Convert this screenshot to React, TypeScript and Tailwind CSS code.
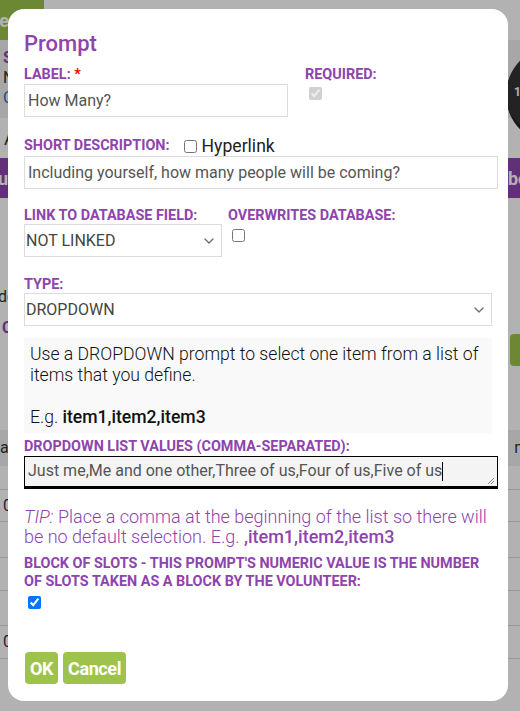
import React from "react";

const Chevron = () => (
  <svg width="10" height="6" viewBox="0 0 10 6" className="pointer-events-none absolute top-1/2 -translate-y-1/2 right-[8px]">
    <path d="M1 1 L5 5 L9 1" fill="none" stroke="#6b6b6b" strokeWidth="1.3" strokeLinecap="round" strokeLinejoin="round" />
  </svg>
);

const Label = ({ children }: { children: React.ReactNode }) => (
  <div className="text-[14.4px] leading-[16px] font-bold text-[#8e44ad] whitespace-nowrap">{children}</div>
);

export default function App() {
  return (
    <div className="relative w-[520px] h-[711px] overflow-hidden bg-white" style={{ fontFamily: "Roboto, 'Noto Sans', sans-serif" }}>
      {/* background page */}
      <div className="flex flex-col w-[520px]">
        <div className="h-[40px] flex">
          <div className="w-[44px] bg-[#9dc34c] text-white font-bold text-[18px] flex items-center justify-end pr-[35px]">Home</div>
        </div>
        <div className="h-[78px] bg-[#f0f0f0] pl-[3px] pt-[8px] flex flex-col text-[16px] leading-[20px]">
          <span className="text-[#8e44ad] font-bold">Sign Up</span>
          <span className="text-[#333]">Name</span>
          <span className="text-[#2a6fb0]">Contact</span>
        </div>
        <div className="h-[40px] flex items-center pl-[4px] text-[18px] text-[#333]">All</div>
        <div className="h-[40px] bg-[#8e44ad] flex items-center justify-between text-white font-bold text-[18px]">
          <span className="-ml-[2px]">up</span>
          <span className="-mr-[28px]">book</span>
        </div>
        <div className="h-[108px] flex items-end text-[16px] leading-[18px] text-[#333]">
          <span className="-ml-[2px]">do</span>
        </div>
        <div className="pt-[14px] pl-[2px] text-[16px] font-bold text-[#8e44ad] leading-[16px]">C</div>
        <div className="flex items-start justify-between pl-[10px] mt-[1px]">
          <div className="h-[36px] w-[200px] border border-[#ccc] flex items-center pl-[2px] text-[16px] text-[#333]">A</div>
          <div className="h-[32px] w-[30px] bg-[#9dc34c] rounded-[4px] -mr-[20px] -mt-[3px]" />
        </div>
        <div className="h-[57px]" />
        <div className="h-[36px] bg-[#f0f0f0] flex items-center justify-between text-[16px] text-[#333]">
          <span>a</span>
          <span className="-mr-[12px]">nd</span>
        </div>
        {[
          { h: "h-[24px]", t: "" },
          { h: "h-[32px]", t: "0" },
          { h: "h-[36px]", t: "" },
          { h: "h-[33px]", t: "" },
          { h: "h-[35px]", t: "" },
          { h: "h-[33px]", t: "0" },
        ].map((r, i) => (
          <div key={i} className={`${r.h} border-b border-[#ddd] flex items-center pl-[3px] text-[16px] text-[#333]`}>{r.t}</div>
        ))}
      </div>
      <div className="absolute left-[506px] top-[46px] w-[100px] h-[98px] rounded-full bg-[#333] border-b-[6px] border-[#222] flex items-center pl-[8px] text-white text-[12px] font-bold">10</div>

      {/* dim overlay */}
      <div className="absolute inset-0 bg-black/30" />

      {/* modal */}
      <div className="absolute left-[8px] top-[9px] w-[500px] h-[692px] bg-white rounded-[16px] pl-[16px] pr-[10px] pt-[22px] flex flex-col">
        <h1 className="text-[22px] leading-[26px] font-medium text-[#8e44ad]">Prompt</h1>

        <div className="flex gap-[17px] mt-[10px]">
          <div className="w-[264px] flex flex-col">
            <Label>
              LABEL: <span className="text-[#ff0000]">*</span>
            </Label>
            <input
              className="mt-[1px] h-[33px] border border-[#dcdcdc] px-[3px] text-[16px] text-[#555] outline-none"
              defaultValue="How Many?"
            />
          </div>
          <div className="flex flex-col">
            <Label>REQUIRED:</Label>
            <input type="checkbox" defaultChecked disabled className="m-0 mt-[4px] ml-[4px] w-[13px] h-[13px]" />
          </div>
        </div>

        <div className="flex items-center h-[16px] mt-[21px]">
          <Label>SHORT DESCRIPTION:</Label>
          <input type="checkbox" className="m-0 ml-[14px] w-[13px] h-[13px]" />
          <span className="ml-[5px] text-[17.6px] leading-[16px] text-[#222]">Hyperlink</span>
        </div>
        <input
          className="mt-[2px] h-[33px] w-[474px] border border-[#dcdcdc] px-[3px] text-[16px] text-[#555] outline-none"
          defaultValue="Including yourself, how many people will be coming?"
        />

        <div className="flex gap-[6px] mt-[19px]">
          <div className="w-[198px] flex flex-col">
            <Label>LINK TO DATABASE FIELD:</Label>
            <div className="relative">
              <select className="appearance-none w-full h-[33px] border border-[#dcdcdc] bg-white pl-[1px] text-[16px] text-[#444] outline-none">
                <option>NOT LINKED</option>
              </select>
              <Chevron />
            </div>
          </div>
          <div className="flex flex-col">
            <Label>OVERWRITES DATABASE:</Label>
            <input type="checkbox" className="m-0 mt-[5px] ml-[4px] w-[13px] h-[13px]" />
          </div>
        </div>

        <div className="mt-[20px]">
          <Label>TYPE:</Label>
        </div>
        <div className="relative w-[468px]">
          <select className="appearance-none w-full h-[33px] border border-[#dcdcdc] bg-white pl-[1px] text-[16px] text-[#444] outline-none">
            <option>DROPDOWN</option>
          </select>
          <Chevron />
        </div>

        <div className="mt-[12px] w-[468px] h-[95px] bg-[#f9f9f9] pl-[6px] pr-0 pt-[6px] text-[17.6px] leading-[21px] text-[#111] font-light">
          <p>Use a DROPDOWN prompt to select one item from a list of items that you define.</p>
          <p className="mt-[21px]">
            E.g. <span className="font-medium">item1,item2,item3</span>
          </p>
        </div>

        <div className="mt-[6px]">
          <Label>DROPDOWN LIST VALUES (COMMA-SEPARATED):</Label>
        </div>
        <div className="relative mt-[1px] w-[474px] h-[33px] bg-[#f4f4f4] border border-black border-b-[3px] pl-[3px] pt-[4px] text-[16px] leading-[20px] text-[#555] flex">
          <span>Just me,Me and one other,Three of us,Four of us,Five of us</span>
          <span className="w-[1px] h-[19px] bg-black mt-[1px]" />
          <svg width="9" height="9" viewBox="0 0 9 9" className="absolute right-[2px] bottom-[1px]">
            <path d="M8 2 L2 8 M8 5 L5 8" stroke="#888" strokeWidth="1" />
          </svg>
        </div>

        <p className="mt-[18px] w-[474px] text-[18px] leading-[20px] font-light text-[#8e44ad]">
          <i>TIP:</i> Place a comma at the beginning of the list so there will be no default selection. E.g.{" "}
          <span className="font-medium">,item1,item2,item3</span>
        </p>

        <div className="mt-[8px] w-[474px] text-[14.4px] leading-[18px] font-bold text-[#8e44ad]">
          BLOCK OF SLOTS - THIS PROMPT'S NUMERIC VALUE IS THE NUMBER OF SLOTS TAKEN AS A BLOCK BY THE VOLUNTEER:
        </div>
        <input type="checkbox" defaultChecked className="m-0 mt-[5px] ml-[4px] w-[13px] h-[13px]" />

        <div className="flex gap-[5px] mt-[43px] ml-[1px]">
          <button className="h-[32px] px-[5px] rounded-[4px] bg-[#9dc34c] text-white font-bold text-[18px] tracking-[-0.4px]">OK</button>
          <button className="h-[32px] px-[5px] rounded-[4px] bg-[#9dc34c] text-white font-bold text-[18px] tracking-[-0.4px]">Cancel</button>
        </div>
      </div>
    </div>
  );
}
